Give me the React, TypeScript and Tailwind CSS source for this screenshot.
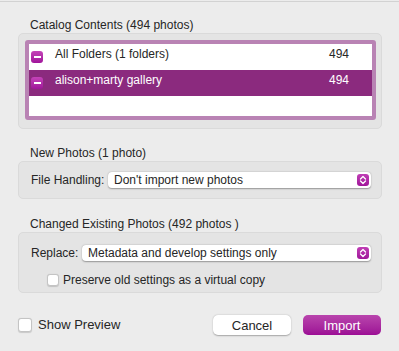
import React from 'react'

type Folder = { label: string; count: number; selected?: boolean }

const folders: Folder[] = [
    { label: 'All Folders (1 folders)', count: 494 },
    { label: 'alison+marty gallery', count: 494, selected: true },
]

const MinusBox = () => (
    <div className="w-[12px] h-[12px] rounded-[3px] bg-gradient-to-b from-[#c443b8] to-[#a0139a] flex items-center justify-center shrink-0">
        <div className="w-[7px] h-[2px] bg-white" />
    </div>
)

const Stepper = () => (
    <div className="w-[12px] h-[12px] rounded-[3px] bg-gradient-to-b from-[#c03db5] to-[#a0159a] flex items-center justify-center">
        <svg width="8" height="10" viewBox="0 0 8 10" fill="none">
            <path d="M1.5 4 L4 1.5 L6.5 4" stroke="white" strokeWidth="1.3" strokeLinecap="round" strokeLinejoin="round" />
            <path d="M1.5 6 L4 8.5 L6.5 6" stroke="white" strokeWidth="1.3" strokeLinecap="round" strokeLinejoin="round" />
        </svg>
    </div>
)

const Select = ({ value, className }: { value: string; className: string }) => (
    <div className={`h-[16px] bg-white rounded-[4px] shadow-[0_0.5px_1.5px_rgba(0,0,0,0.35)] flex items-center justify-between pl-[6px] pr-[2px] ${className}`}>
        <span>{value}</span>
        <Stepper />
    </div>
)

const CheckBox = ({ size }: { size: string }) => (
    <div className={`${size} bg-white rounded-[3px] border border-[#c4c4c4] shadow-[0_0.5px_1px_rgba(0,0,0,0.15)] shrink-0`} />
)

export default function App() {
    return (
        <div className="w-[399px] h-[351px] bg-[#ececec] pt-px font-['Liberation_Sans',Arial,sans-serif] text-[12px] text-[#262626] overflow-hidden">
            <div className="border-t border-[#d2d2d2]">
                {/* Catalog contents */}
                <div className="mt-[16px] pl-[30px] leading-[15px]">Catalog Contents (494 photos)</div>
                <div className="mx-[18px] w-[364px] h-[96px] bg-[#e4e4e4] border border-[#dadada] rounded-[5px] pt-[6px] pl-[6px] pr-[5px]">
                    <div className="h-[80px] border-[4px] border-[#b983b4] rounded-[3px] bg-white">
                        {folders.map((f) => (
                            <div
                                key={f.label}
                                className={`h-[26px] flex items-center pl-[2px] pr-[23px] ${f.selected ? 'bg-[#8b2a7e] text-white' : ''}`}
                            >
                                <MinusBox />
                                <span className="ml-[12px] mb-[6px] flex-1">{f.label}</span>
                                <span className="mb-[6px]">{f.count}</span>
                            </div>
                        ))}
                    </div>
                </div>

                {/* New photos */}
                <div className="mt-[17px] pl-[30px] leading-[15px]">New Photos (1 photo)</div>
                <div className="mx-[18px] w-[364px] h-[38px] bg-[#e4e4e4] border border-[#dadada] rounded-[5px] pl-[12px] pr-[10px] flex items-center">
                    <span className="w-[77px]">File Handling:</span>
                    <Select value="Don't import new photos" className="flex-1" />
                </div>

                {/* Changed existing photos */}
                <div className="mt-[18px] pl-[30px] leading-[15px]">Changed Existing Photos (492 photos )</div>
                <div className="mx-[18px] w-[364px] h-[61px] bg-[#e4e4e4] border border-[#dadada] rounded-[5px] pl-[12px] pr-[10px] pt-[11px]">
                    <div className="flex items-center">
                        <span className="w-[51px]">Replace:</span>
                        <Select value="Metadata and develop settings only" className="flex-1" />
                    </div>
                    <div className="flex items-center mt-[9px] pl-[16px]">
                        <CheckBox size="w-[12px] h-[12px]" />
                        <span className="ml-[4px]">Preserve old settings as a virtual copy</span>
                    </div>
                </div>

                {/* Footer */}
                <div className="mt-[22px] px-[18px] flex items-center text-[13px]">
                    <CheckBox size="w-[14px] h-[14px]" />
                    <span className="ml-[6px] flex-1">Show Preview</span>
                    <button className="w-[78px] h-[20px] bg-white rounded-[5px] shadow-[0_0.5px_1.5px_rgba(0,0,0,0.3)] leading-none">
                        Cancel
                    </button>
                    <button className="ml-[12px] w-[78px] h-[20px] rounded-[5px] bg-gradient-to-b from-[#b944ad] to-[#9c0c95] text-white leading-none">
                        Import
                    </button>
                </div>
            </div>
        </div>
    )
}
